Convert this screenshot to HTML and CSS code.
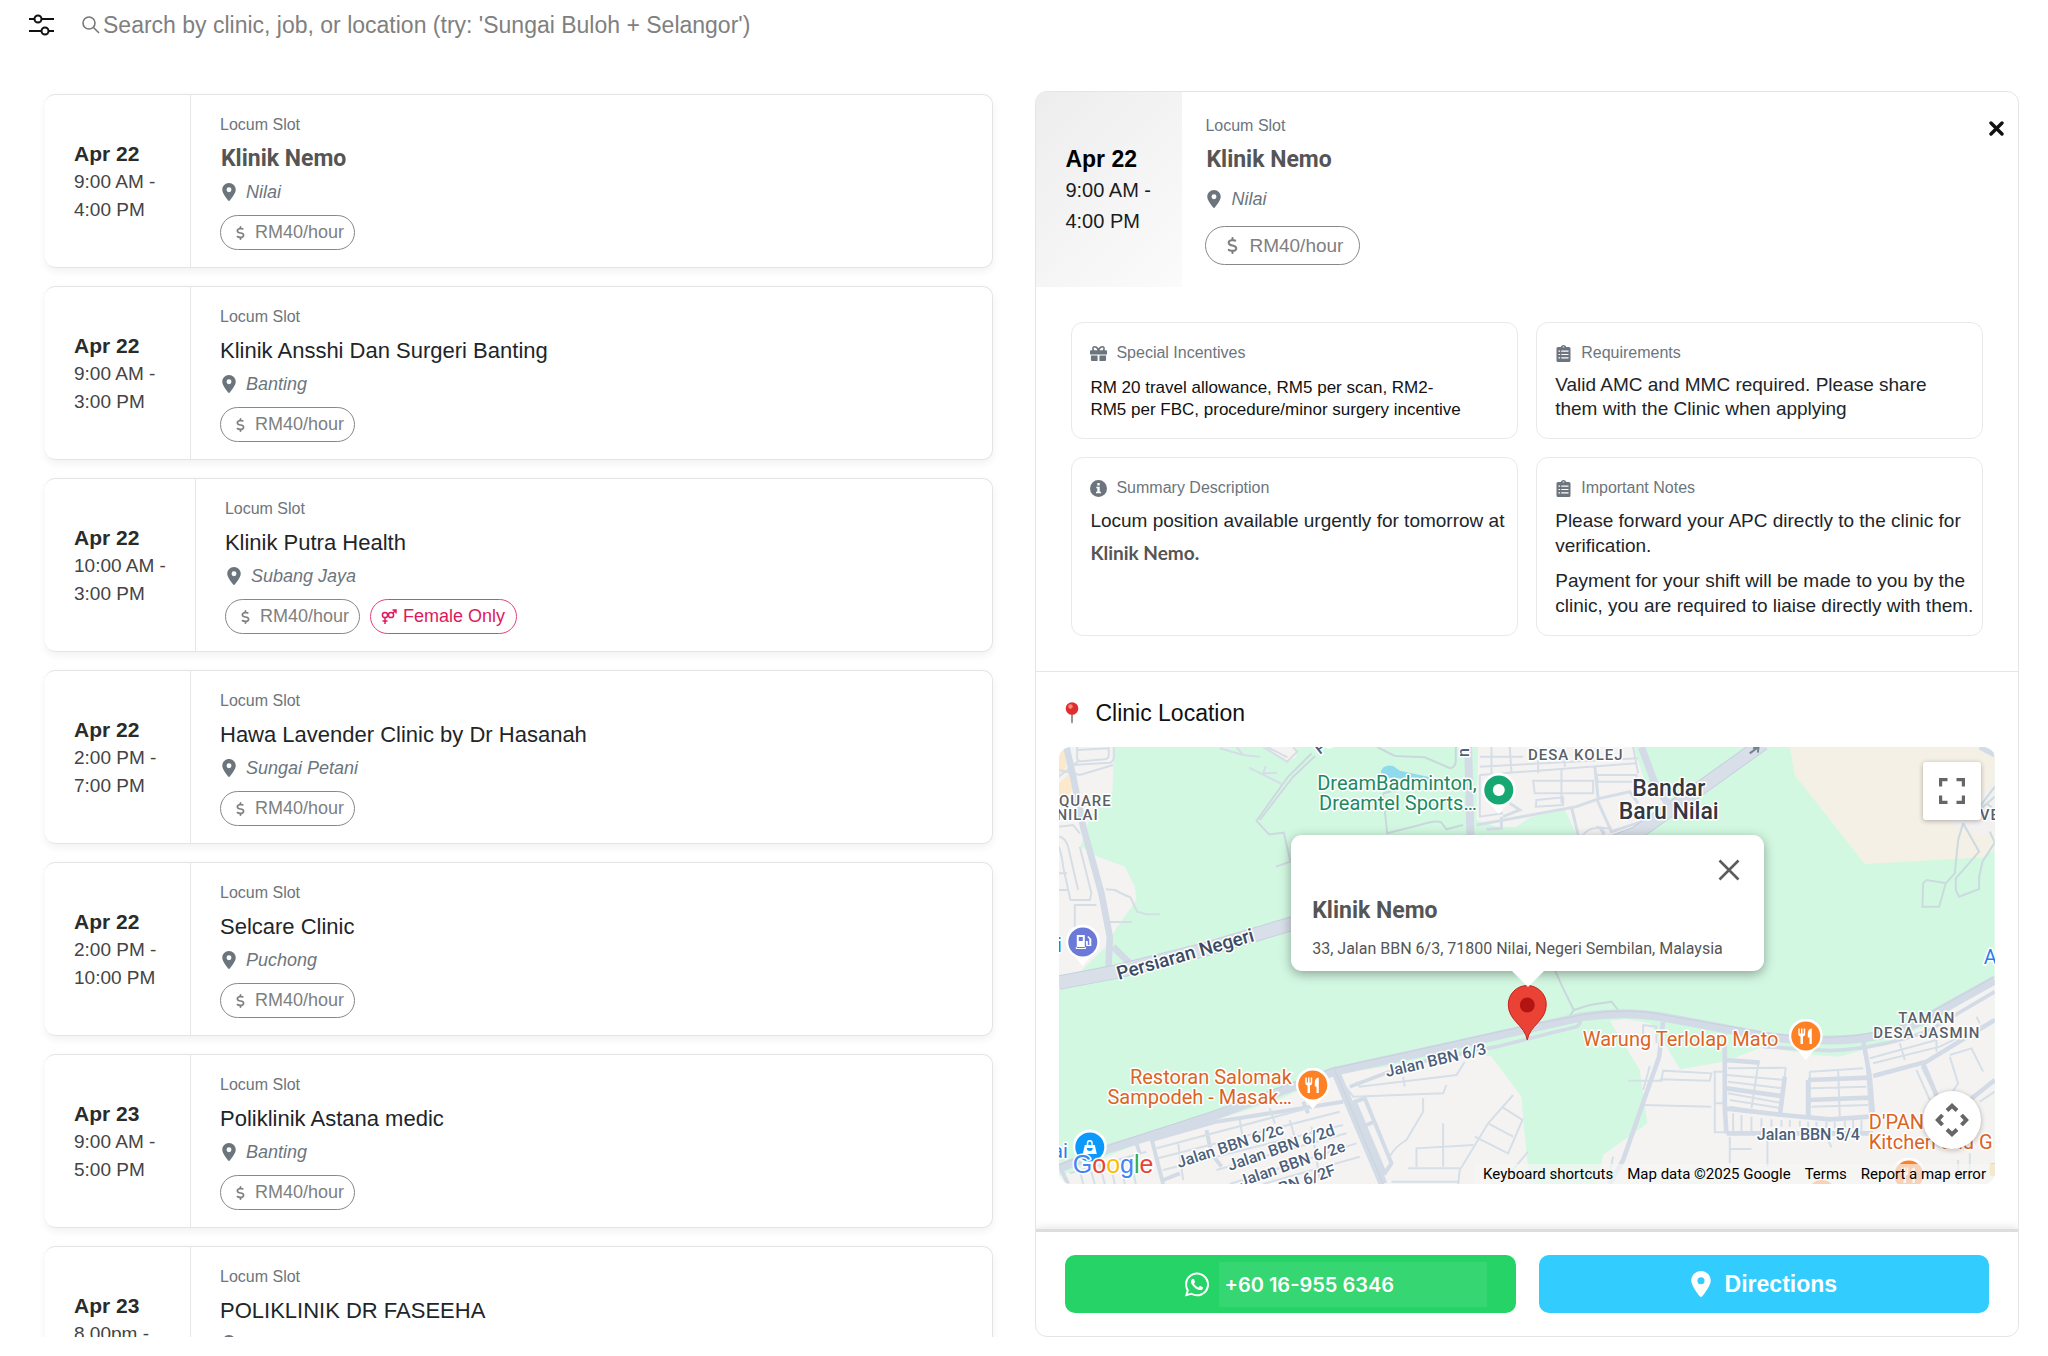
FILE: index.html
```html
<!DOCTYPE html>
<html lang="en">
<head>
<meta charset="utf-8">
<meta name="viewport" content="width=device-width, initial-scale=1">
<title>Locum Slots</title>
<link rel="stylesheet" href="styles.css">
</head>
<body>
<svg class="sprite" aria-hidden="true">
  <symbol id="i-pin" viewBox="0 0 384 512"><path fill-rule="evenodd" d="M215.7 499.2C267 435 384 279.4 384 192C384 86 298 0 192 0S0 86 0 192c0 87.4 117 243 168.3 307.2c12.3 15.3 35.1 15.3 47.4 0zM192 122a70 70 0 1 1 0 140 70 70 0 1 1 0-140z"/></symbol>
  <symbol id="i-dollar" viewBox="0 0 320 512"><path d="M160 0c17.7 0 32 14.3 32 32V67.7c1.6 .2 3.1 .4 4.7 .7c.4 .1 .7 .1 1.1 .2l48 8.8c17.4 3.2 28.9 19.9 25.7 37.2s-19.9 28.9-37.2 25.7l-47.5-8.7c-31.3-4.6-58.9-1.5-78.3 6.2s-27.2 18.3-29 28.1c-2 10.7-.5 16.7 1.2 20.4c1.8 3.9 5.5 8.3 12.8 13.2c16.3 10.7 41.3 17.7 73.7 26.3l2.9 .8c28.6 7.6 63.6 16.8 89.6 33.8c14.2 9.3 27.6 21.9 35.9 39.5c8.5 17.9 10.3 37.9 6.4 59.2c-6.9 38-33.1 63.4-65.6 76.7c-13.7 5.6-28.6 9.2-44.4 11V480c0 17.7-14.3 32-32 32s-32-14.3-32-32V445.1c-.4-.1-.9-.1-1.3-.2c-24.4-3.8-64.5-14.3-91.5-26.3c-16.1-7.2-23.4-26.1-16.2-42.2s26.1-23.4 42.2-16.2c20.9 9.3 55.3 18.5 75.2 21.6c31.9 4.7 58.2 2 76-5.3c16.9-6.9 24.6-16.9 26.8-28.9c1.9-10.6 .4-16.7-1.3-20.4c-1.9-4-5.6-8.4-13-13.3c-16.4-10.7-41.5-17.7-74-26.3l-2.8-.7C119.4 279.3 84.4 270 58.4 253c-14.2-9.3-27.5-22-35.8-39.6c-8.4-17.9-10.1-37.9-6.1-59.2C23.7 116 52.3 91.2 84.8 78.3c13.3-5.3 27.9-8.9 43.2-11V32c0-17.7 14.3-32 32-32z"/></symbol>
  <symbol id="i-list" viewBox="0 0 14 17"><path fill-rule="evenodd" d="M1.500 2H4.500V1.500Q5 0 7 0T9.500 1.500V2H12.500Q14 2 14 3.500V15.500Q14 17 12.500 17H1.500Q0 17 0 15.500V3.500Q0 2 1.500 2ZM6.300 1.600V2.600H7.700V1.600ZM2 5.600V6.800H3.600V5.600ZM4.800 5.600V6.800H12V5.600ZM2 8.900V10.100H3.600V8.900ZM4.800 8.900V10.100H12V8.900ZM2 12.200V13.400H3.600V12.200ZM4.800 12.200V13.400H12V12.200Z"/></symbol>
  <symbol id="i-food" viewBox="-17 -17 34 42">
    <path d="M0 24L-8 14.500A17 17 0 1 1 8 14.500Z" fill="#fff"/>
    <circle r="14.500" fill="#ff8125"/>
    <path fill="#fff" d="M-7.500 -7.500h1.500v5h1.200v-5h1.500v5h1.200v-5h1.500v5.500q0 2-2.200 2.500V8h-2.500V.500q-2.200-.5-2.200-2.500zM2 -2.500q0-4.500 4-5V8H3.700V1.500H2z"/>
  </symbol>
</svg>

<header class="topbar">
  <button class="icon-btn" type="button" aria-label="Filters">
    <svg width="26" height="22" viewBox="0 0 26 22" fill="none" stroke="#111" stroke-width="2"><path d="M0 5H6M12 5H25M0 17H13M19 17H25"/><circle cx="9" cy="5" r="3.500"/><circle cx="16" cy="17" r="3.500"/></svg>
  </button>
  <label class="search">
    <svg width="18" height="18" viewBox="0 0 18 18" fill="none" stroke="#777" stroke-width="1.600"><circle cx="7" cy="7" r="6"/><path d="M11.500 11.500L17 17"/></svg>
    <input type="text" aria-label="Search" placeholder="Search by clinic, job, or location (try: 'Sungai Buloh + Selangor')">
  </label>
</header>

<main class="layout">
  <section class="slots" aria-label="Locum slots">
    <article class="slot">
      <div class="when"><strong>Apr 22</strong><span>9:00 AM -</span><span>4:00 PM</span></div>
      <div class="info">
        <p class="kind">Locum Slot</p><h2 class="active">Klinik Nemo</h2>
        <p class="place"><svg><use href="#i-pin"/></svg>Nilai</p>
        <div class="chips"><span class="chip"><svg><use href="#i-dollar"/></svg>RM40/hour</span></div>
      </div>
    </article>
    <article class="slot">
      <div class="when"><strong>Apr 22</strong><span>9:00 AM -</span><span>3:00 PM</span></div>
      <div class="info">
        <p class="kind">Locum Slot</p><h2>Klinik Ansshi Dan Surgeri Banting</h2>
        <p class="place"><svg><use href="#i-pin"/></svg>Banting</p>
        <div class="chips"><span class="chip"><svg><use href="#i-dollar"/></svg>RM40/hour</span></div>
      </div>
    </article>
    <article class="slot">
      <div class="when"><strong>Apr 22</strong><span>10:00 AM -</span><span>3:00 PM</span></div>
      <div class="info">
        <p class="kind">Locum Slot</p><h2>Klinik Putra Health</h2>
        <p class="place"><svg><use href="#i-pin"/></svg>Subang Jaya</p>
        <div class="chips">
          <span class="chip"><svg><use href="#i-dollar"/></svg>RM40/hour</span>
          <span class="chip female"><svg viewBox="0 0 16 16" fill="none" stroke="currentColor" stroke-width="1.500"><circle cx="4" cy="6" r="2.600"/><circle cx="10" cy="6" r="2.600"/><path d="M4 9V15M1.500 12H6.500M12 4L15 1M11.500 1H15V4.500"/></svg>Female Only</span>
        </div>
      </div>
    </article>
    <article class="slot">
      <div class="when"><strong>Apr 22</strong><span>2:00 PM -</span><span>7:00 PM</span></div>
      <div class="info">
        <p class="kind">Locum Slot</p><h2>Hawa Lavender Clinic by Dr Hasanah</h2>
        <p class="place"><svg><use href="#i-pin"/></svg>Sungai Petani</p>
        <div class="chips"><span class="chip"><svg><use href="#i-dollar"/></svg>RM40/hour</span></div>
      </div>
    </article>
    <article class="slot">
      <div class="when"><strong>Apr 22</strong><span>2:00 PM -</span><span>10:00 PM</span></div>
      <div class="info">
        <p class="kind">Locum Slot</p><h2>Selcare Clinic</h2>
        <p class="place"><svg><use href="#i-pin"/></svg>Puchong</p>
        <div class="chips"><span class="chip"><svg><use href="#i-dollar"/></svg>RM40/hour</span></div>
      </div>
    </article>
    <article class="slot">
      <div class="when"><strong>Apr 23</strong><span>9:00 AM -</span><span>5:00 PM</span></div>
      <div class="info">
        <p class="kind">Locum Slot</p><h2>Poliklinik Astana medic</h2>
        <p class="place"><svg><use href="#i-pin"/></svg>Banting</p>
        <div class="chips"><span class="chip"><svg><use href="#i-dollar"/></svg>RM40/hour</span></div>
      </div>
    </article>
    <article class="slot">
      <div class="when"><strong>Apr 23</strong><span>8.00pm -</span><span>10.00pm</span></div>
      <div class="info">
        <p class="kind">Locum Slot</p><h2>POLIKLINIK DR FASEEHA</h2>
        <p class="place"><svg><use href="#i-pin"/></svg>Bukit Serdang</p>
        <div class="chips"><span class="chip"><svg><use href="#i-dollar"/></svg>RM40/hour</span></div>
      </div>
    </article>
  </section>

  <section class="detail" aria-label="Slot details">
    <header class="detail-head">
      <div class="when"><strong>Apr 22</strong><span>9:00 AM -</span><span>4:00 PM</span></div>
      <div class="info">
        <p class="kind">Locum Slot</p><h2 class="active">Klinik Nemo</h2>
        <p class="place"><svg><use href="#i-pin"/></svg>Nilai</p>
        <div class="chips"><span class="chip"><svg><use href="#i-dollar"/></svg>RM40/hour</span></div>
      </div>
      <button class="icon-btn close" type="button" aria-label="Close"><svg width="15" height="15" viewBox="0 0 15 15" stroke="#111" stroke-width="3.400" stroke-linecap="round"><path d="M2 2L13 13M13 2L2 13"/></svg></button>
    </header>

    <div class="facts">
      <section class="fact incentives">
        <h3><svg viewBox="0 0 18 16"><path fill-rule="evenodd" d="M1 4.500H2.500Q1.500 0 5 0Q7.500 0 9 2.500Q10.500 0 13 0Q16.500 0 15.500 4.500H17Q18 4.500 18 5.500V9H0V5.500Q0 4.500 1 4.500ZM4.500 4.500H8Q6.800 1.700 5 1.700Q3 1.800 4.500 4.500ZM10 4.500H13.500Q15 1.800 13 1.700Q11.200 1.700 10 4.500ZM1 10H8V16H2Q1 16 1 15ZM10 10H17V15Q17 16 16 16H10Z"/></svg>Special Incentives</h3>
        <p>RM 20 travel allowance, RM5 per scan, RM2-<br>RM5 per FBC, procedure/minor surgery incentive</p>
      </section>
      <section class="fact requirements">
        <h3><svg class="narrow"><use href="#i-list"/></svg>Requirements</h3>
        <p>Valid AMC and MMC required. Please share<br>them with the Clinic when applying</p>
      </section>
      <section class="fact">
        <h3><svg viewBox="0 0 17 17"><path fill-rule="evenodd" d="M8.500 0A8.500 8.500 0 1 1 8.500 17A8.500 8.500 0 1 1 8.500 0ZM7.300 3V5.400H9.700V3ZM6.300 6.800V8.300H7.300V11.700H6V13.300H11V11.700H9.700V6.800Z"/></svg>Summary Description</h3>
        <p>Locum position available urgently for tomorrow at</p>
        <p class="clinic">Klinik Nemo.</p>
      </section>
      <section class="fact">
        <h3><svg class="narrow"><use href="#i-list"/></svg>Important Notes</h3>
        <p>Please forward your APC directly to the clinic for verification.</p>
        <p class="next">Payment for your shift will be made to you by the clinic, you are required to liaise directly with them.</p>
      </section>
    </div>

    <section class="location">
      <h3><svg width="14" height="22" viewBox="0 0 14 22"><path d="M6 11H8V20L7 22L6 20Z" fill="#a0938f"/><circle cx="7" cy="6.500" r="6.300" fill="#e02d2d"/><circle cx="5.500" cy="4.500" r="2.200" fill="#f58a80"/></svg>Clinic Location</h3>
      <div class="map">
        <svg class="tiles" viewBox="0 0 936 437" preserveAspectRatio="xMidYMid slice" role="img" aria-label="Map of Bandar Baru Nilai">
          <svg width="936" height="437" viewBox="87 261 2808 1311" fill="none">
            <rect x="87" y="261" width="2808" height="1311" fill="#d3f8e2"/>
            <g fill="#f5f3f2">
              <path d="M87 261H252L248 395L180 470L152 560L205 590L285 620L315 680L320 720L262 800L228 860L140 945L87 945Z"/>
              <path d="M1345 261H1812L1850 380L1925 450L1760 525H1640L1605 448L1500 472L1460 500L1400 500L1340 480Z"/>
              <path d="M700 261H800V290L775 305Z"/>
              <path d="M87 1550L330 1450L720 1330L930 1240L1140 1210L1340 1180L1385 1190L1475 1310L1482 1400L1500 1572H87Z"/>
              <path d="M1740 1082L1790 1078L1860 1090L1910 1160L1950 1228L2085 1205L2200 1160L2350 1185L2430 1190L2500 1170L2700 1095L2895 960V1572H1700L1720 1485L1853 1390L1830 1230Z"/>
            </g>
            <path d="M2280 261L2295 345L2505 612L2860 592L2895 570V261Z" fill="#f5f0e5"/>
            <path d="M2760 485L2895 370V530L2820 515Z" fill="#f2f0f1"/>
            <path d="M87 370L120 340L130 380L110 430L87 410ZM87 261H105L110 320L87 350Z" fill="#fbe9cd"/>
            <path d="M1053 335Q1060 312 1090 318L1110 332L1215 355L1240 366L1060 352Z" fill="#90daee"/>
            <g stroke="#d5dee7" stroke-width="6">
              <path d="M142 261V295Q142 305 155 304L225 298Q237 296 237 285V261M145 270L235 265M130 315L240 308Q252 305 252 290V261M250 315L150 345L87 330M87 350L150 300"/>
              <path d="M87 500L130 495L150 520M87 530Q105 530 115 560L145 690M87 560Q95 580 100 620L122 720H180L185 700L150 560M87 640H112M87 690H118M135 860V735H200M135 735V800L155 850"/>
              <path d="M228 688L255 690Q290 708 302 712L322 755L350 763H390M240 786H307"/>
              <path d="M570 265L640 285L690 290M620 261L640 285M658 323L755 372M708 318L700 340L742 338M700 261L772 305L802 275L790 261M712 261L773 292"/>
              <path d="M846 280L775 350L680 483L718 523L762 518L782 605L738 620M856 288L790 350L690 480" stroke="#cdd9df"/>
              <path d="M1042 261L1095 288L1185 292L1262 325Q1278 320 1278 300V261M1060 400L1072 520L1170 495Q1220 478 1235 488L1250 508L1300 495M1060 400L1100 390" stroke="#c9d8dc"/>
              <path d="M1350 290H1480M1350 320L1500 312L1825 295M1385 261V345M1440 261L1445 340M1350 345L1820 310M1350 345V470L1420 460M1510 362H1690V400H1515ZM1595 330V430M1520 420L1600 412V435L1518 440ZM1700 345H1820V365H1705ZM1810 261L1825 340M1525 300V340M1605 290V320M1740 500Q1750 510 1700 500Q1715 500 1725 520M1660 525Q1680 500 1710 505L1722 525"/>
              <path d="M1340 495L1640 440L1710 415L1800 395L1825 430M1700 415L1745 515L1880 470M1695 320L1705 415M1625 440L1645 525M1415 470V505L1370 508M1440 430L1470 450L1420 470" stroke-width="9"/>
              <path d="M2800 490L2785 540L2775 640L2748 670L2728 740H2678L2680 670L2690 660L2750 670M2800 490L2848 575L2778 655V690L2788 710L2848 687V650L2858 605L2895 548L2880 515M2895 380L2850 440M2895 410L2855 445M2870 430L2895 450" stroke="#cbdade"/>
              <path d="M1575 930L1600 985L1632 1050L1620 1068M1632 1050L1680 1035L1745 1025L1765 1050" stroke="#c9d8dc"/>
            </g>
            <g stroke="#d3dce6" stroke-linejoin="round">
              <path d="M110 261L130 350L160 500L215 700L240 830L235 945M250 860L320 930" stroke-width="20"/>
              <path d="M87 968L260 935L520 870L790 790L1500 640L1820 520L1990 400L2200 250" stroke="#c6d0de" stroke-width="44"/>
              <path d="M87 968L260 935L520 870L790 790L1500 640L1820 520L1990 400L2200 250" stroke="#d8dfe8" stroke-width="38"/>
              <path d="M1315 261L1322 530" stroke-width="24"/>
              <path d="M1835 261L1875 370L1920 440" stroke-width="22"/>
              <path d="M2850 261L2895 285" stroke-width="16"/>
              <path d="M87 1525L240 1465L560 1365L910 1235L1140 1185L1500 1105L1660 1070Q1800 1050 1920 1075L2160 1120Q2250 1140 2400 1140Q2560 1140 2680 1080L2895 960" stroke-width="27"/>
              <path d="M87 1515L240 1455L560 1350L910 1225L1140 1175L1500 1095L1660 1064Q1800 1040 1920 1068L2160 1110Q2250 1130 2400 1132Q2560 1128 2680 1070L2895 950" stroke="#c6d1dd" stroke-width="3"/>
              <path d="M960 1280L1140 1212L1400 1160L1560 1120L1640 1100Q1655 1090 1650 1080M2200 1160L2400 1172Q2560 1165 2700 1110L2895 995" stroke-width="11"/>
              <path d="M915 1230L1060 1572" stroke-width="26"/>
              <path d="M915 1230L1060 1572" stroke="#c3ceda" stroke-width="2"/>
              <path d="M975 1325L1005 1315L1085 1510L1065 1540ZM1010 1395L1035 1385" stroke-width="12"/>
              <path d="M365 1435L400 1572M95 1530L115 1572M365 1440L560 1385L940 1325M530 1410L545 1480L575 1520M820 1325L835 1360M400 1560L450 1540M320 1450L330 1480" stroke-width="12"/>
            </g>
            <g stroke="#d5dfe7" stroke-width="6">
              <path d="M380 1465L850 1340M385 1495L930 1355M400 1530L940 1395M560 1530L950 1420M600 1572L980 1450M720 1345L735 1390M630 1380L640 1440M445 1450L460 1560M780 1380L800 1450M120 1540L350 1475M150 1530L160 1572M180 1520L195 1572M210 1515L225 1572M240 1505L255 1572M270 1495L285 1572M300 1485L318 1572M700 1572L990 1490M845 1400L870 1560M940 1270L970 1310L1240 1300L1250 1275M980 1265L990 1280L1280 1245L1305 1205M1120 1250L1125 1280M1180 1315V1355L1130 1440Q1095 1460 1080 1490"/>
              <path d="M1450 1305L1375 1390L1290 1530L1285 1572M1415 1340L1478 1380L1435 1480L1335 1430M1375 1390L1450 1430M1240 1390V1520M1160 1520V1465L1330 1455M1135 1525H1290M1085 1565H1290M1495 1475L1440 1540"/>
              <path d="M1840 1095V1150M1838 1095L1880 1100V1150M1860 1218L1840 1290M1795 1262H1895L1900 1232L2045 1240L2040 1262L1890 1258M1840 1335L2045 1340M1750 1490L1740 1540M2100 1430V1510M2100 1467H2165M2213 1440V1520M2395 1440L2405 1462M2785 1500V1572M2820 1480V1540"/>
              <path d="M2050 1235H2080M2055 1235V1417H2085M2055 1330H2080M2095 1225L2268 1223M2090 1245L2265 1260M2095 1265L2260 1285M2095 1300L2260 1330M2100 1320L2255 1345M2100 1340L2250 1365M2185 1215L2165 1345M2268 1223L2250 1370"/>
              <path d="M2340 1235L2500 1225M2340 1235V1370M2345 1258L2510 1250M2340 1285L2510 1280M2345 1340L2515 1335M2425 1230L2430 1370M2510 1200L2525 1430M2110 1360V1420M2135 1365V1420M2165 1370V1420M2195 1375V1420M2225 1378V1400M2255 1380V1400M2280 1380V1400M2310 1382V1400M2335 1385V1405M2360 1385V1405M2390 1385V1405M2415 1385V1405M2445 1382V1405M2470 1380V1405M2495 1378V1420"/>
              <path d="M2520 1195L2720 1140M2530 1210L2730 1160L2895 1080M2610 1150L2625 1200M2760 1185L2825 1165L2860 1235M2760 1190L2785 1270L2765 1300M2720 1120V1175M2840 1070L2850 1090M2660 1230L2700 1320M2675 1220L2720 1310M2825 1310L2895 1265M2850 1325L2895 1295"/>
            </g>
            <g stroke="#d3dce6" stroke-width="14">
              <path d="M1900 1085L1888 1190L1780 1500L1740 1572M2085 1120V1345L2090 1420M2085 1200L2190 1208M2085 1345L2260 1365L2400 1378L2520 1370M2090 1285L2255 1308M2265 1250L2250 1368M2335 1260V1370M2335 1260L2520 1253M2335 1320L2520 1313M2500 1140L2520 1250L2530 1370M2090 1420H2530M2530 1248L2690 1205L2895 1080M2680 1210L2730 1330M2820 1320L2895 1260"/>
            </g>
            <path d="M2160 280L2180 265M2170 264L2186 264L2184 278" stroke="#73858f" stroke-width="6"/>
            <rect x="2880" y="1510" width="30" height="38" rx="5" fill="#f2cf62"/>
          </svg>
          <g class="area">
            <text x="53" y="59" text-anchor="end">SQUARE</text>
            <text x="40" y="73" text-anchor="end">NILAI</text>
            <text x="517" y="13" text-anchor="middle">DESA KOLEJ</text>
            <text x="868" y="276" text-anchor="middle">TAMAN</text>
            <text x="868" y="291" text-anchor="middle">DESA JASMIN</text>
            <text x="921" y="73">VE</text>
          </g>
          <g class="town" text-anchor="middle">
            <text x="610" y="49">Bandar</text><text x="610" y="72">Baru Nilai</text>
          </g>
          <g class="road">
            <text class="main" transform="translate(60 233) rotate(-16)">Persiaran Negeri</text>
            <text transform="translate(328 330) rotate(-13)">Jalan BBN 6/3</text>
            <text transform="translate(120 421) rotate(-18)">Jalan BBN 6/2c</text>
            <text transform="translate(171 424) rotate(-19)">Jalan BBN 6/2d</text>
            <text transform="translate(182 440) rotate(-19)">Jalan BBN 6/2e</text>
            <text transform="translate(172 464) rotate(-19)">Jalan BBN 6/2F</text>
            <text x="698" y="393">Jalan BBN 5/4</text>
            <text transform="translate(261 8) rotate(-38)">Pe</text>
            <text transform="translate(410 10) rotate(-90)">nu</text>
          </g>
          <g class="poi sport" text-anchor="end">
            <text x="418" y="43">DreamBadminton,</text><text x="418" y="63">Dreamtel Sports…</text>
          </g>
          <g class="poi food">
            <text x="233" y="337" text-anchor="end">Restoran Salomak</text><text x="233" y="357" text-anchor="end">Sampodeh - Masak…</text>
            <text x="524" y="299">Warung Terlolap Mato</text>
            <text x="810" y="382">D'PAN</text><text x="810" y="402">Kitchen and G</text>
          </g>
          <g class="poi transit">
            <text x="925" y="217">A</text><text x="9" y="411" text-anchor="end">ai</text><text x="3" y="205" text-anchor="end">i</text>
          </g>
          <g transform="translate(440 43)"><path d="M0 24L-8 14.500A17 17 0 1 1 8 14.500Z" fill="#fff"/><circle r="14.500" fill="#17a773"/><circle r="6" fill="#fff"/></g>
          <g transform="translate(24 195)"><path d="M0 24L-8 14.500A17 17 0 1 1 8 14.500Z" fill="#fff"/><circle r="14.500" fill="#6b79d8"/><path fill="#fff" fill-rule="evenodd" d="M-6 -7H2V6H-6ZM-4 -5V-1H0V-5ZM-7 5H3V7H-7ZM3 -1H5V3H6.500V-3L4.500 -5L5.500 -6L8.500 -3V4H3.500Z"/></g>
          <g transform="translate(31 400)"><path d="M0 24L-8 14.500A17 17 0 1 1 8 14.500Z" fill="#fff"/><circle r="14.500" fill="#0b99fb"/><path fill="#fff" fill-rule="evenodd" d="M-5 -2H-3V-4A3 3 0 0 1 3 -4V-2H5L7 7H-7ZM-1.500 -2H1.500V-4A1.500 1.500 0 0 0 -1.500 -4ZM-3 1A3 3 0 0 0 3 1Z"/></g>
          <use href="#i-food" x="237" y="321" width="34" height="42"/>
          <use href="#i-food" x="730" y="272" width="34" height="42"/>
          <use href="#i-food" x="833" y="411" width="34" height="42"/>
          <circle cx="763" cy="447" r="14" fill="#ff8125"/>
          <text class="logo" x="14" y="426"><tspan fill="#4285f4">G</tspan><tspan fill="#ea4335">o</tspan><tspan fill="#fbbc05">o</tspan><tspan fill="#4285f4">g</tspan><tspan fill="#34a853">l</tspan><tspan fill="#ea4335">e</tspan></text>
          <path d="M468.500 293C466 278 449.500 274 449.500 257.500A19 19 0 0 1 487.500 257.500C487.500 274 471 278 468.500 293Z" fill="#ea4335" stroke="#c5221f"/>
          <circle cx="468.500" cy="258" r="7.500" fill="#b31412"/>
        </svg>

        <div class="bubble">
          <button class="icon-btn" type="button" aria-label="Close"><svg width="22" height="22" viewBox="0 0 22 22" stroke="#5c5c5c" stroke-width="2.600"><path d="M1.500 1.500L20.500 20.500M20.500 1.500L1.500 20.500"/></svg></button>
          <h4>Klinik Nemo</h4>
          <p>33, Jalan BBN 6/3, 71800 Nilai, Negeri Sembilan, Malaysia</p>
        </div>
        <button class="map-btn fullscreen" type="button" aria-label="Toggle fullscreen"><svg width="26" height="26" viewBox="0 0 26 26" fill="none" stroke="#666" stroke-width="3.200"><path d="M1.600 8.500V1.600H8.500M17.500 1.600H24.400V8.500M24.400 17.500V24.400H17.500M8.500 24.400H1.600V17.500"/></svg></button>
        <button class="map-btn camera" type="button" aria-label="Map camera controls"><svg width="34" height="34" viewBox="0 0 34 34" fill="none" stroke="#666" stroke-width="4"><path d="M12 7.500L17 2.800L22 7.500M12 26.500L17 31.200L22 26.500M7.500 12L2.800 17L7.500 22M26.500 12L31.200 17L26.500 22"/></svg></button>
        <div class="credits"><a href="#">Keyboard shortcuts</a><span>Map data ©2025 Google</span><a href="#">Terms</a><a href="#">Report a map error</a></div>
      </div>
    </section>

    <footer class="actions">
      <a class="call" href="tel:+60169556346"><svg width="24" height="25" viewBox="0 26 448 460" fill="#fff"><path d="M380.900 97.100C339 55.100 283.200 32 223.900 32c-122.400 0-222 99.600-222 222 0 39.100 10.200 77.300 29.600 111L0 480l117.700-30.900c32.400 17.700 68.900 27 106.100 27h.1c122.300 0 224.100-99.600 224.100-222 0-59.300-25.200-115-67.100-157zm-157 341.600c-33.200 0-65.700-8.900-94-25.700l-6.700-4-69.800 18.300L72 359.200l-4.400-7c-18.500-29.400-28.200-63.300-28.200-98.200 0-101.700 82.800-184.500 184.600-184.500 49.300 0 95.600 19.200 130.400 54.100 34.800 34.900 56.200 81.200 56.100 130.500 0 101.800-84.900 184.600-186.600 184.600zm101.200-138.200c-5.500-2.800-32.800-16.200-37.900-18-5.100-1.900-8.800-2.800-12.500 2.800-3.700 5.600-14.300 18-17.600 21.800-3.200 3.700-6.500 4.200-12 1.400-32.600-16.300-54-29.100-75.500-66-5.700-9.800 5.700-9.100 16.300-30.300 1.800-3.700.9-6.900-.5-9.700-1.400-2.800-12.500-30.100-17.100-41.200-4.500-10.800-9.100-9.300-12.500-9.500-3.200-.2-6.900-.2-10.600-.2-3.700 0-9.700 1.400-14.800 6.900-5.100 5.600-19.400 19-19.400 46.300 0 27.300 19.900 53.700 22.600 57.400 2.800 3.700 39.100 59.700 94.800 83.800 35.200 15.200 49 16.500 66.600 13.900 10.700-1.600 32.800-13.400 37.400-26.400 4.600-13 4.600-24.100 3.200-26.400-1.300-2.500-5-3.900-10.500-6.600z"/></svg><span>+60 16-955 6346</span></a>
      <a class="go" href="#"><svg width="20" height="26" fill="#fff"><use href="#i-pin"/></svg>Directions</a>
    </footer>
  </section>
</main>
</body>
</html>
```
FILE: styles.css
```css
* { box-sizing: border-box; }
body {
  margin: 0;
  height: 100vh;
  display: flex;
  flex-direction: column;
  overflow: hidden;
  background: #fff;
  color: #212529;
  font-family: "Liberation Sans", Arial, sans-serif;
}
h2, h3, h4, p { margin: 0; font-weight: 400; }
.sprite { position: absolute; width: 0; height: 0; }
.icon-btn { border: 0; padding: 0; background: none; display: flex; cursor: pointer; }

.topbar { display: flex; align-items: center; gap: 27px; height: 49px; padding: 0 29px; flex: none; }
.search { display: flex; align-items: center; gap: 3px; flex: 1; }
.search input { flex: 1; border: 0; outline: 0; padding: 0; font: 23px/30px "Liberation Sans", Arial, sans-serif; background: none; }
.search input::placeholder { color: #808080; opacity: 1; }

.layout {
  flex: 1;
  min-height: 0;
  display: grid;
  grid-template-columns: minmax(0, 27fr) minmax(0, 28fr);
  gap: 42px;
  padding: 42px 29px 19px 45px;
}

.slots { min-height: 0; overflow: hidden; display: flex; flex-direction: column; gap: 18px; padding: 3px 8px 0; margin: 0 -8px; }
.slot {
  display: flex;
  flex: none;
  height: 174px;
  border: 1px solid #e4e4e4;
  border-left: 0;
  border-radius: 10px;
  box-shadow: 0 3px 8px rgba(0, 0, 0, .06);
  background: #fff;
}
.when { display: flex; flex-direction: column; justify-content: center; min-width: 146px; padding: 0 29px; color: #444; font-size: 19px; line-height: 28px; white-space: nowrap; }
.when strong { color: #2b2b2b; font-size: 21px; line-height: 29px; }
.slot .when { border-right: 1px solid #e6e6e6; }
.info { flex: 1; padding: 18px 29px; }
.kind { color: #6c757d; font-size: 16px; line-height: 24px; }
.info h2 { margin: 6px 0 5px; font-size: 22px; line-height: 32px; }
.info h2.active { padding-left: 1px; color: #555; font-family: Roboto, sans-serif; font-size: 23px; font-weight: 700; }
.place { display: flex; align-items: center; gap: 10px; color: #6c757d; font-size: 18px; font-style: italic; line-height: 24px; }
.place svg { width: 14px; height: 18px; margin-left: 2px; fill: #6c757d; }
.chips { display: flex; gap: 10px; margin-top: 11px; }
.chip { display: flex; align-items: center; gap: 7px; height: 35px; padding: 0 10px 0 12px; border: 1px solid #888; border-radius: 18px; color: #808080; font-size: 18px; }
.chip svg { width: 15px; height: 14px; fill: currentColor; }
.chip.female { gap: 6px; padding: 0 11px 0 10px; border-color: #e8407c; color: #e0185c; }
.chip.female svg { width: 16px; height: 16px; fill: none; }

.detail { display: flex; flex-direction: column; min-height: 0; border: 1px solid #e4e4e4; border-radius: 12px; overflow: hidden; }
.detail-head { display: flex; align-items: flex-start; }
.detail-head .when { min-height: 195px; color: #1c1c1c; background: linear-gradient(135deg, #ededed, #fbfbfb); font-size: 20px; line-height: 31px; }
.detail-head .when strong { color: #000; font-size: 23px; line-height: 32px; }
.detail-head .info { padding: 22px 23px 0; }
.detail-head h2 { margin: 6px 0; }
.detail-head .place { margin-top: 11px; }
.detail-head .chips { margin-top: 15px; }
.detail-head .chip { gap: 9px; height: 39px; padding: 0 16px 0 19px; border-radius: 20px; font-size: 19px; }
.detail-head .chip svg { height: 17px; }
.close { margin: 29px 14px 0 0; }

.facts { display: grid; grid-template-columns: 1fr 1fr; gap: 18px; padding: 35px; border-bottom: 1px solid #e6e6e6; }
.fact { padding: 18px 8px 17px 18px; border: 1px solid #e9e9e9; border-radius: 12px; font-size: 19px; line-height: 25px; }
.fact h3 { display: flex; align-items: center; gap: 9px; margin-bottom: 8px; color: #6c757d; font-size: 16px; line-height: 24px; }
.fact h3 svg { width: 17px; height: 17px; fill: #6c757d; }
.fact h3 .narrow { padding: 0 1px; }
.fact.incentives { font-size: 17px; line-height: 22px; color: #111; }
.incentives h3 { margin-bottom: 12px; }
.fact.requirements { line-height: 24px; }
.fact .next { margin-top: 10px; }
.fact .clinic { margin-top: 7px; color: #555; font-family: Lato, sans-serif; font-weight: 700; }

.location { padding: 23px 23px 0; flex: 1; }
.location h3 { display: flex; align-items: center; gap: 16px; padding-left: 6px; margin-bottom: 16px; color: #111; font-size: 23px; line-height: 36px; }
.map { position: relative; height: 437px; border-radius: 12px; overflow: hidden; font-family: Roboto, sans-serif; }
.tiles { display: block; width: 100%; height: 100%; }
.tiles text { paint-order: stroke; stroke: #fff; stroke-width: 3px; stroke-linejoin: round; }
.area { fill: #5a5f68; font-size: 15px; font-weight: 500; letter-spacing: 1px; }
.town { fill: #33373f; font-size: 23px; font-weight: 500; }
.road { fill: #4d5f7a; font-size: 16px; font-weight: 500; }
.road .main { fill: #3b4b63; font-size: 19px; }
.poi { font-size: 20px; }
.sport { fill: #21895f; }
.food { fill: #db6425; }
.transit { fill: #2b7de9; }
.logo { font-family: "Liberation Sans", sans-serif; font-size: 25px; }

.bubble { position: absolute; top: 88px; left: 50%; width: 473px; margin-left: -236px; padding: 24px 21px 9px; background: #fff; border-radius: 11px; box-shadow: 0 3px 12px rgba(0, 0, 0, .35); color: #555; }
.bubble::after { content: ""; position: absolute; top: 100%; left: 50%; margin-left: -16px; border: 16px solid transparent; border-top-color: #fff; border-bottom: 0; }
.bubble .icon-btn { margin: 0 3px 0 auto; }
.bubble h4 { margin: 15px 0 10px; font-size: 23px; font-weight: 700; line-height: 30px; }
.bubble p { font-size: 16px; line-height: 26px; }
.map-btn { position: absolute; right: 14px; width: 58px; height: 58px; padding: 0; border: 0; display: flex; align-items: center; justify-content: center; background: #fff; box-shadow: 0 1px 5px rgba(0, 0, 0, .3); }
.fullscreen { top: 15px; border-radius: 3px; }
.camera { bottom: 35px; border-radius: 50%; }
.credits { position: absolute; right: 0; bottom: 0; display: flex; gap: 14px; padding: 0 9px; background: rgba(245, 245, 245, .7); font-size: 15px; line-height: 20px; color: #000; }
.credits a { color: #000; text-decoration: none; }

.actions { display: grid; grid-template-columns: 1fr 1fr; gap: 23px; padding: 23px 29px; border-top: 3px solid #ddd; box-shadow: 0 -2px 8px rgba(0, 0, 0, .1); }
.actions a { display: flex; align-items: center; justify-content: center; height: 58px; border-radius: 10px; color: #fff; text-decoration: none; font-weight: 700; }
.actions .call { gap: 10px; padding: 0 29px 0 120px; background: #25d366; font-family: Inter, sans-serif; font-size: 20px; font-weight: 600; }
.call span { flex: 1; padding: 1px 5px 0; line-height: 44px; background: rgba(255, 255, 255, .08); }
.actions .go { gap: 14px; background: #33ccff; font-size: 23px; }
```
